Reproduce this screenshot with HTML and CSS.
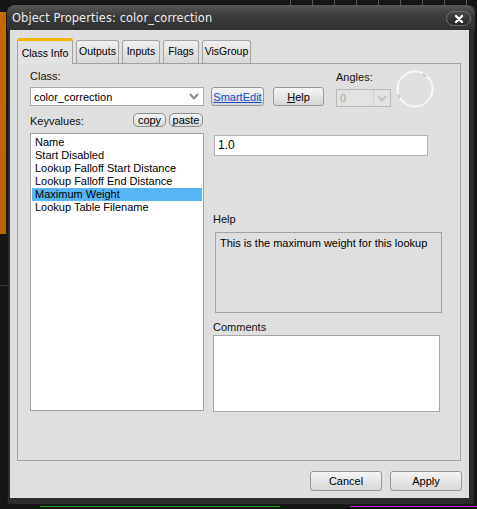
FILE: index.html
```html
<!DOCTYPE html>
<html lang="en">
<head>
    <meta charset="UTF-8">
    <title>Object Properties</title>
    <link rel="stylesheet" href="styles.css">
</head>
<body>
    <!-- Object Properties dialog -->
    <div class="window">
        <div class="titlebar">
            <span class="title">Object Properties: color_correction</span>
            <button class="close-btn">
                <svg width="10" height="10" viewBox="0 0 10 10">
                    <path d="M2 2 L8 8 M8 2 L2 8" stroke="#fff" stroke-width="2.4" stroke-linecap="round"/>
                </svg>
            </button>
        </div>

        <div class="client">
            <div class="tabs">
                <div class="tab active tab-class">Class Info</div>
                <div class="tab tab-outputs">Outputs</div>
                <div class="tab tab-inputs">Inputs</div>
                <div class="tab tab-flags">Flags</div>
                <div class="tab tab-visgroup">VisGroup</div>
            </div>

            <div class="panel">
                <div class="top-row">
                    <div class="class-col">
                        <label class="field-label">Class:</label>
                        <div class="combo">
                            <span>color_correction</span>
                            <svg class="chevron" width="10" height="7" viewBox="0 0 10 7">
                                <path d="M1 1 L5 5.5 L9 1" fill="none" stroke="#8c8c8c" stroke-width="2"/>
                            </svg>
                        </div>
                    </div>
                    <button class="btn smartedit">SmartEdit</button>
                    <button class="btn help-btn"><u>H</u>elp</button>
                    <div class="angles">
                        <label class="field-label">Angles:</label>
                        <div class="angle-combo">
                            <span class="angle-value">0</span>
                            <span class="angle-drop">
                                <svg width="10" height="7" viewBox="0 0 10 7">
                                    <path d="M1 1 L5 5.5 L9 1" fill="none" stroke="#c4c4c4" stroke-width="2"/>
                                </svg>
                            </span>
                        </div>
                    </div>
                    <svg class="dial" width="38" height="38" viewBox="0 0 38 38">
                        <circle cx="19" cy="19" r="17.5" fill="none" stroke="#f6f6f6" stroke-width="2"/>
                        <path d="M27 4 A17.5 17.5 0 0 1 30 6.5" fill="none" stroke="#c8c8c8" stroke-width="2"/>
                        <path d="M2.2 24 A17.5 17.5 0 0 0 4 28" fill="none" stroke="#c8c8c8" stroke-width="2"/>
                        <rect x="18.5" y="18.5" width="1" height="1" fill="#c0c0c0"/>
                    </svg>
                </div>

                <div class="kv-row">
                    <label class="field-label kv-label">Keyvalues:</label>
                    <button class="pill-btn copy-btn">copy</button>
                    <button class="pill-btn paste-btn">paste</button>
                </div>

                <div class="main-row">
                    <ul class="kv-list">
                        <li>Name</li>
                        <li>Start Disabled</li>
                        <li>Lookup Falloff Start Distance</li>
                        <li>Lookup Falloff End Distance</li>
                        <li class="selected">Maximum Weight</li>
                        <li>Lookup Table Filename</li>
                    </ul>

                    <div class="detail">
                        <div class="value-box">1.0</div>
                        <label class="field-label help-label">Help</label>
                        <div class="help-box">This is the maximum weight for this lookup</div>
                        <label class="field-label comments-label">Comments</label>
                        <div class="comments-box"></div>
                    </div>
                </div>
            </div>

            <div class="footer">
                <button class="btn footer-btn">Cancel</button>
                <button class="btn footer-btn">Apply</button>
            </div>
        </div>
    </div>
</body>
</html>
```

FILE: styles.css
```css
* {
    margin: 0;
    padding: 0;
    box-sizing: border-box;
}

/* Editor viewport behind the dialog */
body {
    width: 477px;
    height: 509px;
    overflow: hidden;
    font-family: 'Liberation Sans', Arial, sans-serif;
    font-size: 11px;
    color: #000;
    background:
        linear-gradient(#c26a00, #b86400) 0 12px / 6px 222px no-repeat,
        linear-gradient(#3a3a3a, #3a3a3a) 0 285px / 7px 1px no-repeat,
        linear-gradient(90deg, #1fa81f, #1fa81f) 40px 506px / 240px 1px no-repeat,
        linear-gradient(90deg, #d21fd2, #d21fd2) 350px 506px / 127px 1px no-repeat,
        repeating-linear-gradient(90deg, #555 0 1px, transparent 1px 22px) 290px 0 / 187px 5px no-repeat,
        #161616;
}

/* Window frame */
.window {
    margin: 5px 0 0 7px;
    width: 468px;
    height: 500px;
    background-color: #2c2c2c;
    border-radius: 8px 8px 2px 2px;
    box-shadow: inset 0 0 0 1px #1a1a1a;
}

.titlebar {
    height: 25px;
    display: flex;
    align-items: center;
    justify-content: space-between;
    padding: 0 4px 0 5px;
    background: linear-gradient(#565656, #3b3b3b 45%, #303030);
    border-radius: 8px 8px 0 0;
}

.title {
    font-family: 'DejaVu Sans', Verdana, sans-serif;
    font-size: 11.4px;
    color: #ececec;
    letter-spacing: 0.1px;
    margin-top: 1px;
}

.close-btn {
    width: 25px;
    height: 15px;
    margin-top: 2px;
    border: 1px solid #6c6c6c;
    border-radius: 8px;
    background: linear-gradient(#4a4a4a, #262626);
    display: flex;
    align-items: center;
    justify-content: center;
}

/* Grey client area */
.client {
    margin: 0 6px 0 3px;
    height: 468px;
    background-color: #dfdfdf;
    padding: 8px 8px 0 7px;
}

/* Tabs */
.tabs {
    display: flex;
    align-items: flex-end;
    height: 25px;
    gap: 3px;
}

.tab {
    height: 23px;
    text-align: center;
    font-size: 10.5px;
    line-height: 21px;
    white-space: nowrap;
    border: 1px solid #a4a4a4;
    border-bottom: none;
    border-radius: 3px 3px 0 0;
    background: linear-gradient(#efefef, #d8d8d8);
}

.tab.active {
    height: 26px;
    margin-bottom: -1px;
    line-height: 25px;
    border-top: 3px solid #f5b400;
    background: #e2e2e2;
    position: relative;
    z-index: 1;
}

.tab-class { width: 56px; }
.tab-outputs { width: 43px; }
.tab-inputs { width: 38px; }
.tab-flags { width: 36px; }
.tab-visgroup { width: 49px; }

.panel {
    width: 444px;
    height: 398px;
    border: 1px solid #a3a3a3;
    padding: 6px 0 0 12px;
}

.field-label {
    display: block;
    line-height: 13px;
    color: #111;
}

/* Class / buttons / angles row */
.top-row {
    display: flex;
    align-items: flex-start;
    height: 38px;
}

.class-col {
    width: 174px;
}

.combo {
    margin-top: 4px;
    height: 19px;
    background: #fff;
    border: 1px solid #a9a9a9;
    display: flex;
    align-items: center;
    justify-content: space-between;
    padding: 0 4px 0 3px;
}

.btn {
    font-family: 'Liberation Sans', Arial, sans-serif;
    font-size: 11px;
    color: #000;
    border: 1px solid #999;
    border-radius: 3px;
    background: linear-gradient(#f6f6f6, #e6e6e6 50%, #d6d6d6);
}

.smartedit {
    margin: 17px 0 0 7px;
    width: 53px;
    height: 19px;
    color: #1550c8;
    text-decoration: underline;
}

.help-btn {
    margin: 17px 0 0 9px;
    width: 51px;
    height: 19px;
}

.angles {
    margin-left: 12px;
    width: 55px;
    padding-top: 1px;
}

.angle-combo {
    margin-top: 5px;
    height: 18px;
    border: 1px solid #b9b9b9;
    background: #e2e2e2;
    display: flex;
}

.angle-value {
    flex: 1;
    color: #a6a6a6;
    padding-left: 3px;
    line-height: 16px;
}

.angle-drop {
    width: 17px;
    border-left: 1px solid #cfcfcf;
    display: flex;
    align-items: center;
    justify-content: center;
}

.dial {
    margin-left: 5px;
}

/* Keyvalues header */
.kv-row {
    margin-top: 5px;
    width: 174px;
    height: 14px;
    display: flex;
    align-items: center;
}

.kv-label {
    flex: 1;
    padding-top: 2px;
}

.pill-btn {
    font-family: 'Liberation Sans', Arial, sans-serif;
    font-size: 11px;
    height: 14px;
    line-height: 12px;
    border: 1px solid #8e8e8e;
    border-radius: 5px;
    background: linear-gradient(#f4f4f4, #d9d9d9);
}

.copy-btn {
    width: 33px;
}

.paste-btn {
    width: 34px;
    margin: 0 1px 0 3px;
}

/* List and detail area */
.main-row {
    display: flex;
    margin-top: 6px;
}

.kv-list {
    list-style: none;
    width: 174px;
    height: 278px;
    background: #fff;
    border: 1px solid #a2a2a2;
    padding: 2px 1px;
}

.kv-list li {
    line-height: 13px;
    padding-left: 3px;
}

.kv-list li.selected {
    background-color: #55b5f5;
}

.detail {
    margin-left: 9px;
    width: 230px;
}

.value-box {
    margin: 2px 0 0 1px;
    width: 214px;
    height: 21px;
    background: #fff;
    border: 1px solid #b2b2b2;
    padding-left: 3px;
    line-height: 19px;
    font-size: 12px;
}

.help-label {
    margin-top: 57px;
}

.help-box {
    margin: 6px 0 0 2px;
    width: 227px;
    height: 81px;
    border: 1px solid #a2a2a2;
    padding: 4px 0 0 4px;
    line-height: 13px;
}

.comments-label {
    margin-top: 8px;
}

.comments-box {
    margin-top: 1px;
    width: 227px;
    height: 77px;
    background: #fff;
    border: 1px solid #a6a6a6;
}

/* Dialog buttons */
.footer {
    display: flex;
    justify-content: flex-end;
    gap: 8px;
    margin-top: 10px;
    margin-right: -1px;
}

.footer-btn {
    width: 72px;
    height: 20px;
}
```
